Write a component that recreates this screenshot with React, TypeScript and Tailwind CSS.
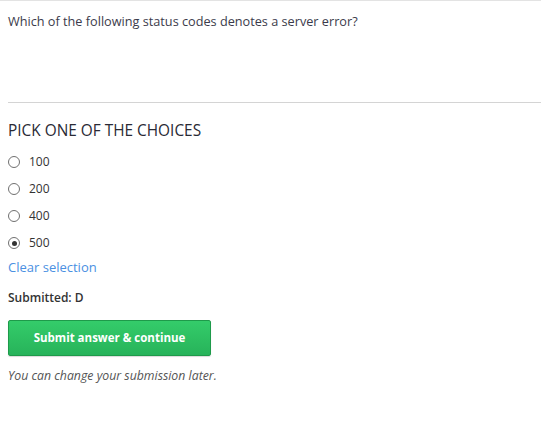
import React from "react";

function Radio({ checked }: { checked?: boolean }) {
  return (
    <span className="inline-flex h-[12px] w-[12px] items-center justify-center rounded-full border border-[#707070] bg-white">
      {checked && <span className="h-[5px] w-[5px] rounded-full bg-[#333]" />}
    </span>
  );
}

export default function App() {
  const choices = ["100", "200", "400", "500"];
  return (
    <div className="min-h-[422px] w-[541px] bg-white text-[#333] border-t border-[#e3e3e3]" style={{ fontFamily: '"Open Sans", "Noto Sans", sans-serif' }}>
      <div className="pl-2 pt-[10px] text-[12.7px] leading-[20px] text-[#3b3b4b]">
        Which of the following status codes denotes a server error?
      </div>
      <div className="ml-2 mt-[71px] border-t border-[#d4d4d4]" />
      <div className="px-2">
        <div className="mt-[18px] text-[15.4px] leading-[20px] text-[#2a2a35]">PICK ONE OF THE CHOICES</div>
        <div className="mt-[11px] flex flex-col gap-[7px]">
          {choices.map((c) => (
            <label key={c} className="flex h-[20px] items-center gap-[9px] text-[12px] text-[#333]">
              <Radio checked={c === "500"} />
              <span>{c}</span>
            </label>
          ))}
        </div>
        <div className="mt-[4px] text-[13px] leading-[20px] text-[#4a90e2]">Clear selection</div>
        <div className="mt-[12px] text-[12px] font-semibold leading-[18px] text-[#333]">Submitted: D</div>
        <button className="mt-[13px] h-[36px] w-[203px] rounded-[2px] border border-[#1e9a4a] bg-gradient-to-b from-[#34cc6a] to-[#27b35a] text-[11.5px] font-bold text-white shadow-[0_1px_1px_rgba(0,0,0,0.15)]">
          Submit answer &amp; continue
        </button>
        <div className="mt-[11px] text-[12.3px] italic leading-[18px] text-[#555]">You can change your submission later.</div>
      </div>
    </div>
  );
}
